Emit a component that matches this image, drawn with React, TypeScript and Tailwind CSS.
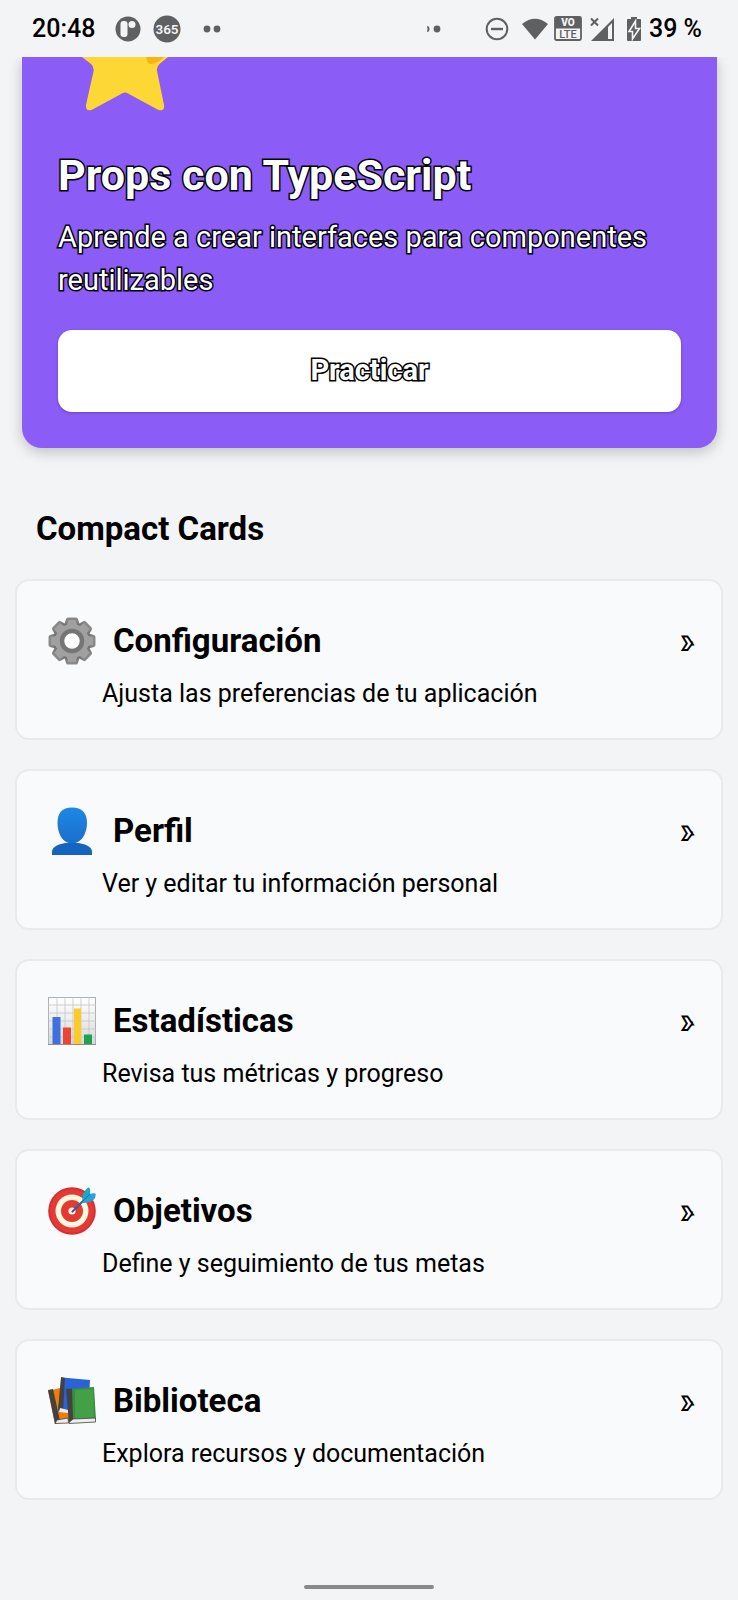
import React from "react";

const outlined = "text-white [-webkit-text-stroke:3px_#000] [paint-order:stroke_fill]";
const outlinedHeavy = "text-white [-webkit-text-stroke:4px_#000] [paint-order:stroke_fill]";

function StatusBar() {
  return (
    <header className="flex h-[57px] items-center pl-8 pr-9 text-[25px] font-medium leading-8 text-black">
      <time>20:48</time>
      <svg className="ml-5 h-[26px] w-[26px]" viewBox="0 0 26 26" aria-hidden="true">
        <circle cx="13" cy="13" r="12.5" fill="#5f6061" />
        <rect x="5.5" y="5" width="7" height="16" rx="3" fill="#f3f4f6" />
        <circle cx="17" cy="8.5" r="3.5" fill="#f3f4f6" />
      </svg>
      <svg className="ml-3 h-7 w-7" viewBox="0 0 28 28" role="img" aria-label="365">
        <circle cx="14" cy="14" r="13.5" fill="#5f6061" />
        <text x="14" y="18.500" textAnchor="middle" fontSize="13.500" fontWeight="600" fill="#f3f4f6">365</text>
      </svg>
      <svg className="ml-[22px] h-2 w-[18px]" viewBox="0 0 18 8" aria-hidden="true">
        <circle cx="4" cy="4" r="3.4" fill="#5f6061" />
        <circle cx="14" cy="4" r="3.4" fill="#5f6061" />
      </svg>
      <div className="ml-auto flex items-center">
        <svg className="mr-11 h-2 w-[14px]" viewBox="0 0 14 8" aria-hidden="true">
          <path d="M0 1Q2.500 1 2.500 4T0 7Q1 4 0 1Z" fill="#5f6061" />
          <circle cx="10" cy="4" r="3.4" fill="#5f6061" />
        </svg>
        <svg className="mr-3 h-6 w-6" viewBox="0 0 24 24" aria-hidden="true" fill="none" stroke="#5f6061" strokeWidth="2">
          <circle cx="12" cy="12" r="10.3" />
          <path d="M6 12h12" strokeWidth="2.4" />
        </svg>
        <svg className="mr-[5px] h-6 w-7" viewBox="0 0 28 24" aria-hidden="true">
          <path d="M1 7Q14-3.5 27 7L14 22.5Z" fill="#5f6061" />
        </svg>
        <svg className="mr-2 h-[25px] w-7" viewBox="0 0 28 25" role="img" aria-label="VoLTE">
          <rect x="1" y="1" width="26" height="23" rx="1.5" fill="none" stroke="#5f6061" strokeWidth="1.8" />
          <path d="M1 1h26v11.500H1z" fill="#5f6061" />
          <text x="14" y="10" textAnchor="middle" fontSize="10" fontWeight="900" fill="#f3f4f6">VO</text>
          <text x="14" y="22" textAnchor="middle" fontSize="11" fontWeight="500" fill="#5f6061">LTE</text>
        </svg>
        <svg className="mr-3 h-6 w-6" viewBox="0 0 24 24" aria-hidden="true">
          <path d="M1 1.500l7 7M8 1.500l-7 7" stroke="#5f6061" strokeWidth="2" />
          <path fillRule="evenodd" d="M24 1v23H1ZM18 10v12h4V6Z" fill="#5f6061" />
        </svg>
        <svg className="mr-[7px] h-6 w-4" viewBox="0 0 16 24" aria-hidden="true">
          <path d="M5 0h6v2h3q1 0 1 1v20q0 1-1 1H2q-1 0-1-1V3q0-1 1-1h3Z" fill="#5f6061" />
          <path d="M9.500 4L3 14.500h3.500V22L13.500 11.500H9.500Z" fill="#5f6061" stroke="#f3f4f6" strokeWidth="1.600" />
        </svg>
        <span>39 %</span>
      </div>
    </header>
  );
}

function Star() {
  return (
    <svg className="ml-5 h-[55px] w-[96px]" viewBox="0 0 96 55" aria-hidden="true">
      <path
        d="M0-4L4 0L13 7Q16.200 9.500 15.600 14L8 48Q7.600 55 14 52.800L44 36.500Q47 34.300 50 36.500L80 52.800Q87 55 86 48L79 14Q78.400 9.500 81.500 7L90 0L95-4Z"
        fill="#fdd835"
      />
      <path d="M68-1H86Q82 5 76 6.500Q70 8 69 4Z" fill="#f9b315" />
    </svg>
  );
}

function GearIcon() {
  return (
    <svg className="h-12 w-12" viewBox="0 0 48 48" aria-hidden="true">
      <defs>
        <linearGradient id="gear" x1="0" y1="0" x2="0" y2="1">
          <stop offset="0" stopColor="#8e8e8e" />
          <stop offset="1" stopColor="#6c6c6c" />
        </linearGradient>
      </defs>
      <g fill="url(#gear)">
        <circle cx="24" cy="24" r="18.500" />
        {[0, 45, 90, 135, 180, 225, 270, 315].map((a) => (
          <path key={a} d="M16 9L18 2Q18.300.500 20 .500H28Q29.700.500 30 2L32 9Z" transform={`rotate(${a} 24 24)`} />
        ))}
      </g>
      <g fill="#a0a0a0">
        <circle cx="24" cy="24" r="17" />
        {[0, 45, 90, 135, 180, 225, 270, 315].map((a) => (
          <path key={a} d="M18.500 10L20 3H28L29.500 10Z" transform={`rotate(${a} 24 24)`} />
        ))}
      </g>
      <circle cx="24" cy="24" r="10" fill="#fff" stroke="#757575" strokeWidth="4.500" />
    </svg>
  );
}

function PersonIcon() {
  return (
    <svg className="h-12 w-12" viewBox="0 0 48 48" aria-hidden="true">
      <defs>
        <linearGradient id="head" x1="0" y1="0" x2="0" y2="1">
          <stop offset="0" stopColor="#1e88e5" />
          <stop offset="1" stopColor="#1a6ecb" />
        </linearGradient>
      </defs>
      <path d="M4 48V45Q4 40 11 37.500Q17 35.500 24 35.500T37 37.500Q44 40 44 45V48Z" fill="#1565c0" />
      <path d="M24 .500C34 .500 39 6 39 16C39 27 33 36.500 24 36.500S9.500 27 9.500 16C9.500 6 14 .500 24 .500Z" fill="url(#head)" />
    </svg>
  );
}

function ChartIcon() {
  return (
    <svg className="h-12 w-12" viewBox="0 0 48 48" aria-hidden="true">
      <defs>
        <linearGradient id="sheet" x1="0" y1="0" x2="0" y2="1">
          <stop offset="0" stopColor="#fff" />
          <stop offset="1" stopColor="#d8d8d8" />
        </linearGradient>
      </defs>
      <rect x=".5" y=".5" width="47" height="47" fill="url(#sheet)" stroke="#b0b0b0" />
      <path d="M9 0V48M17 0V48M25 0V48M33 0V48M41 0V48M0 8H48M0 16H48M0 24H48M0 32H48M0 40H48" stroke="#c5c5c5" strokeWidth=".8" />
      <path d="M4.500 20h8v28h-8z" fill="#3e70e0" />
      <path d="M15 30.500h8V48h-8z" fill="#ed4434" />
      <path d="M26 11.500h7V48h-7z" fill="#fbcb28" />
      <path d="M36 37.500h8V48h-8z" fill="#1da152" />
      <path d="M0 47.500H48" stroke="#8d8d8d" />
    </svg>
  );
}

function TargetIcon() {
  return (
    <svg className="h-12 w-12" viewBox="0 0 48 48" aria-hidden="true">
      <circle cx="24" cy="24" r="23.800" fill="#d32f2f" />
      <circle cx="24" cy="24" r="22" fill="#e53935" />
      <circle cx="24" cy="24" r="16.500" fill="#fff8e1" />
      <circle cx="24" cy="24" r="11" fill="#e53935" />
      <circle cx="24" cy="24" r="3.600" fill="#fff8e1" />
      <path d="M24.500 24.500L38 11" stroke="#2a6496" strokeWidth="2.200" strokeLinecap="round" />
      <path d="M34.500 14.500Q33 6 40 .500Q43 0 42 7L36 14Z" fill="#18a9c4" />
      <path d="M35 14.500L41 7Q49 5 47.500 8Q48 12 43 14.500Q39 16 34 16Z" fill="#2f9fd8" />
      <path d="M32 17L42 7" stroke="#1976a8" strokeWidth="1" />
    </svg>
  );
}

function BooksIcon() {
  return (
    <svg className="h-12 w-12" viewBox="0 0 48 48" aria-hidden="true">
      <path d="M0 14L16 10L24 44L7 47Z" fill="#f57c00" />
      <path d="M0 13L5 12L12 44L7 47Z" fill="#424242" />
      <path d="M7 46.500L9 43L20 41L20.500 46Z" fill="#eee" stroke="#424242" strokeWidth=".8" />
      <path d="M14 .500L42 3L40 38L10 34Z" fill="#2962d9" />
      <path d="M13 0L17 1L15 35L10 33Z" fill="#424242" />
      <path d="M11 35L20 36V33L12 31Z" fill="#eee" />
      <path d="M19 12L46 10L48 43L21 45Z" fill="#388e3c" />
      <path d="M27 13L45 12L46 41L27 42Z" fill="#43a047" />
      <path d="M18 12L24 11.500L25 43L21 46.500Z" fill="#424242" />
      <path d="M21 45.500L25 42L47.500 41V45L21 46.500Z" fill="#eee" stroke="#424242" strokeWidth=".8" />
    </svg>
  );
}

const cards = [
  { icon: <GearIcon />, title: "Configuración", text: "Ajusta las preferencias de tu aplicación" },
  { icon: <PersonIcon />, title: "Perfil", text: "Ver y editar tu información personal" },
  { icon: <ChartIcon />, title: "Estadísticas", text: "Revisa tus métricas y progreso" },
  { icon: <TargetIcon />, title: "Objetivos", text: "Define y seguimiento de tus metas" },
  { icon: <BooksIcon />, title: "Biblioteca", text: "Explora recursos y documentación" },
];

export default function App() {
  return (
    <div className="flex min-h-screen flex-col bg-[#f3f4f6] font-[Roboto,sans-serif] text-black">
      <StatusBar />
      <main className="overflow-hidden">
        <section className="ml-[22px] mr-[21px] rounded-b-[20px] bg-[#8b5cf6] px-9 pb-9 shadow-[0_4px_14px_rgba(0,0,0,0.22)]">
          <Star />
          <h1 className={`pt-9 text-[43px] font-bold leading-[54px] ${outlined}`}>Props con TypeScript</h1>
          <p className={`mt-[14px] text-[29px] leading-[43px] ${outlined}`}>
            Aprende a crear interfaces para componentes reutilizables
          </p>
          <button
            type="button"
            className={`mt-7 block h-[82px] w-full rounded-[14px] bg-white text-[29px] font-bold shadow-[0_1px_3px_rgba(0,0,0,0.25)] ${outlined}`}
          >
            Practicar
          </button>
        </section>
        <h2 className="mt-[61px] px-9 text-[33px] font-bold leading-10">Compact Cards</h2>
        <ul className="mx-[15px] mt-[30px] flex flex-col gap-[29px]">
          {cards.map((card) => (
            <li key={card.title}>
              <a href="#" className="block rounded-[14px] border-2 border-[#e9eaec] bg-[#f9fafb] pb-[26px] pl-[31px] pr-[29px] pt-9">
                <div className="flex items-center gap-[17px]">
                  {card.icon}
                  <h3 className="flex-1 text-[33px] font-bold leading-[48px]">{card.title}</h3>
                  <span aria-hidden="true" className={`text-[29px] font-medium leading-8 ${outlinedHeavy}`}>›</span>
                </div>
                <p className="mt-[11px] pl-[54px] text-[25px] leading-9">{card.text}</p>
              </a>
            </li>
          ))}
        </ul>
      </main>
      <div className="mx-auto mb-[11px] mt-auto h-1 w-[130px] rounded-full bg-[#88898b]" />
    </div>
  );
}
